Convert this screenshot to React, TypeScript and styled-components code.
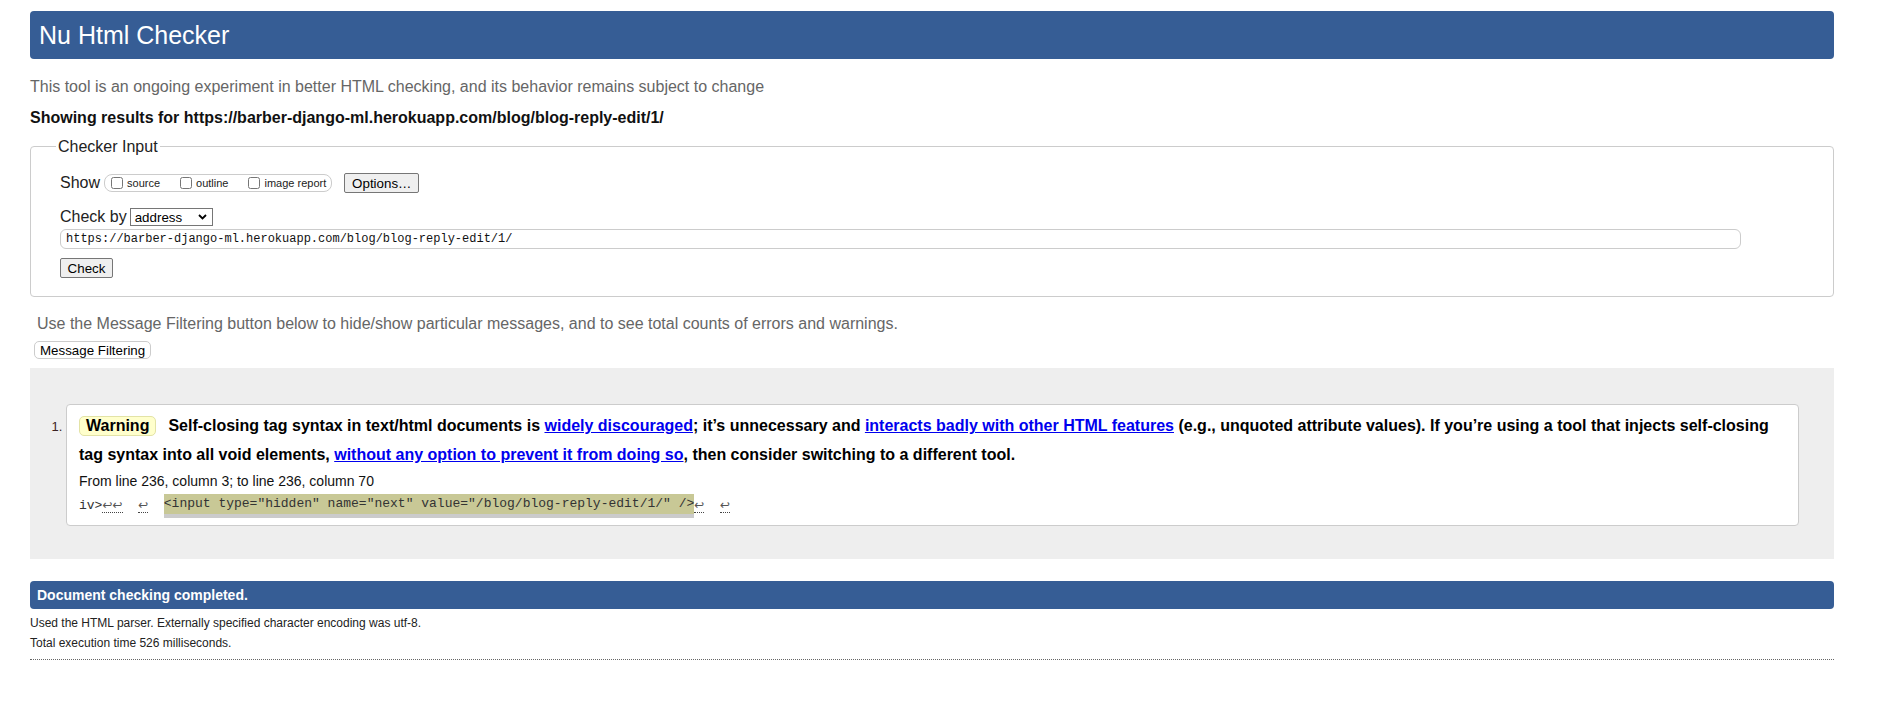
import styled, { createGlobalStyle } from "styled-components";

const GlobalStyle = createGlobalStyle`
   body {
      margin: 0;
      background: #fff;
      color: #111;
      font-family: "Liberation Sans", Arial, sans-serif;
   }
`;

const Page = styled.div`
   padding: 11px 43px 40px 30px;
`;

const TitleBar = styled.h1`
   margin: 0;
   height: 48px;
   display: flex;
   align-items: center;
   padding-left: 9px;
   background: #365d95;
   color: #fff;
   font-size: 25px;
   font-weight: normal;
   border-radius: 4px;
`;

const Intro = styled.p`
   margin: 18px 0 0;
   font-size: 16px;
   line-height: 19px;
   color: #666;
`;

const ResultsFor = styled.p`
   margin: 12px 0 0;
   font-size: 16px;
   line-height: 19px;
   font-weight: bold;
   color: #111;
`;

const InputSet = styled.fieldset`
   margin: 10px 0 0;
   padding: 17px 20px 18px 29px;
   border: 1px solid #ccc;
   border-radius: 4px;
`;

const Legend = styled.legend`
   margin-left: -4px;
   padding: 0 2px;
   font-size: 16px;
   line-height: 19px;
   color: #222;
`;

const FormRow = styled.div<{ $gap: number }>`
   display: flex;
   align-items: center;
   height: 20px;
   margin-bottom: ${(p) => p.$gap}px;
   font-size: 16px;
   color: #222;
`;

const ShowGroup = styled.span`
   display: inline-flex;
   align-items: center;
   height: 16px;
   margin-left: 4px;
   padding: 0 5px 0 6px;
   border: 1px solid #ccc;
   border-radius: 8px;
`;

const Option = styled.label`
   display: inline-flex;
   align-items: center;
   gap: 4px;
   font-size: 11px;
   color: #222;
   & + & {
      margin-left: 20px;
   }
   input {
      margin: 0;
      width: 12px;
      height: 12px;
   }
`;

const NativeButton = styled.button<{ $width: number; $offset?: number }>`
   height: 20px;
   width: ${(p) => p.$width}px;
   margin-left: ${(p) => p.$offset ?? 0}px;
   padding: 0;
   font-family: "Liberation Sans", Arial, sans-serif;
   font-size: 13.33px;
   color: #000;
   background: #efefef;
   border: 1px solid #767676;
   border-radius: 2px;
`;

const FakeSelect = styled.div`
   display: flex;
   align-items: center;
   justify-content: space-between;
   box-sizing: border-box;
   width: 83px;
   height: 18px;
   margin-left: 3px;
   padding: 0 5px 0 4px;
   border: 1px solid #767676;
   font-size: 13.33px;
   color: #000;
`;

const UrlField = styled.input`
   box-sizing: border-box;
   width: 1681px;
   height: 20px;
   padding: 0 5px;
   border: 1px solid #ccc;
   border-radius: 6px;
   font-family: "Liberation Mono", "DejaVu Sans Mono", monospace;
   font-size: 12px;
   color: #111;
`;

const FilterNote = styled(Intro)`
   margin: 17px 0 0;
   padding-left: 7px;
`;

const FilterButton = styled.button`
   height: 18px;
   margin: 8px 0 0 4px;
   padding: 0 5px;
   font-family: "Liberation Sans", Arial, sans-serif;
   font-size: 13.33px;
   color: #000;
   background: #fff;
   border: 1px solid #ccc;
   border-radius: 5px;
`;

const ResultsPanel = styled.div`
   margin-top: 9px;
   padding: 36px 35px 33px 36px;
   background: #eee;
`;

const MessageList = styled.ol`
   margin: 0;
   padding: 0;
   list-style: decimal outside;
`;

const Message = styled.li`
   padding: 6px 12px 7px;
   background: #fff;
   border: 1px solid #ccc;
   border-radius: 4px;
   &::marker {
      font-size: 13px;
      color: #3a2222;
   }
`;

const MessageText = styled.p`
   margin: 0;
   font-size: 16px;
   line-height: 29px;
   font-weight: bold;
   color: #000;
   a {
      color: #0000ee;
   }
`;

const Badge = styled.span`
   display: inline-block;
   margin-right: 12px;
   padding: 0 6px;
   line-height: 18px;
   background: #ffffcc;
   border: 1px solid #e3e3a6;
   border-radius: 5px;
`;

const Location = styled.p`
   margin: 4px 0 0;
   font-size: 14px;
   line-height: 16px;
   color: #111;
`;

const Extract = styled.p`
   margin: 5px 0 0;
   font-family: "Liberation Mono", "DejaVu Sans Mono", monospace;
   font-size: 13px;
   line-height: 24px;
   color: #333;
   white-space: pre;
`;

const LineBreak = styled.span`
   font-family: "DejaVu Sans", sans-serif;
   font-size: 12px;
   line-height: 14px;
   color: #555;
   border-bottom: 1px dotted #444;
`;

const Highlight = styled.span`
   display: inline-block;
   line-height: 20px;
   background: #c8c896;
   border-bottom: 4px solid #cbcbcb;
   vertical-align: top;
`;

const DoneBar = styled.h2`
   margin: 22px 0 0;
   height: 28px;
   display: flex;
   align-items: center;
   padding-left: 7px;
   background: #365d95;
   color: #fff;
   font-size: 14px;
   font-weight: bold;
   border-radius: 4px;
`;

const Detail = styled.p<{ $top: number }>`
   margin: ${(p) => p.$top}px 0 0;
   font-size: 12px;
   line-height: 14px;
   color: #222;
`;

const DottedRule = styled.div`
   margin-top: 9px;
   border-top: 1px dotted #666;
`;

const Chevron = () => (
   <svg width="9" height="6" viewBox="0 0 9 6">
      <path d="M1 1l3.5 3.5L8 1" fill="none" stroke="#000" strokeWidth="1.8" />
   </svg>
);

const url = "https://barber-django-ml.herokuapp.com/blog/blog-reply-edit/1/";

const App = () => {
   return (
      <>
         <GlobalStyle />
         <Page>
            <TitleBar>Nu Html Checker</TitleBar>
            <Intro>
               This tool is an ongoing experiment in better HTML checking, and its behavior remains
               subject to change
            </Intro>
            <ResultsFor>Showing results for {url}</ResultsFor>

            <InputSet>
               <Legend>Checker Input</Legend>
               <FormRow $gap={14}>
                  Show
                  <ShowGroup>
                     <Option>
                        <input type="checkbox" />
                        source
                     </Option>
                     <Option>
                        <input type="checkbox" />
                        outline
                     </Option>
                     <Option>
                        <input type="checkbox" />
                        image report
                     </Option>
                  </ShowGroup>
                  <NativeButton $width={75} $offset={12}>
                     Options…
                  </NativeButton>
               </FormRow>
               <FormRow $gap={2}>
                  Check by
                  <FakeSelect>
                     address
                     <Chevron />
                  </FakeSelect>
               </FormRow>
               <FormRow $gap={9}>
                  <UrlField defaultValue={url} />
               </FormRow>
               <FormRow $gap={0}>
                  <NativeButton $width={53}>Check</NativeButton>
               </FormRow>
            </InputSet>

            <FilterNote>
               Use the Message Filtering button below to hide/show particular messages, and to see
               total counts of errors and warnings.
            </FilterNote>
            <FilterButton>Message Filtering</FilterButton>

            <ResultsPanel>
               <MessageList>
                  <Message>
                     <MessageText>
                        <Badge>Warning</Badge>
                        Self-closing tag syntax in text/html documents is{" "}
                        <a href="#">widely discouraged</a>; it’s unnecessary and{" "}
                        <a href="#">interacts badly with other HTML features</a> (e.g., unquoted
                        attribute values). If you’re using a tool that injects self-closing tag
                        syntax into all void elements,{" "}
                        <a href="#">without any option to prevent it from doing so</a>, then
                        consider switching to a different tool.
                     </MessageText>
                     <Location>From line 236, column 3; to line 236, column 70</Location>
                     <Extract>
                        iv&gt;<LineBreak>↩↩</LineBreak>
                        {"  "}
                        <LineBreak>↩</LineBreak>
                        {"  "}
                        <Highlight>
                           &lt;input type="hidden" name="next" value="/blog/blog-reply-edit/1/" /&gt;
                        </Highlight>
                        <LineBreak>↩</LineBreak>
                        {"  "}
                        <LineBreak>↩</LineBreak>
                     </Extract>
                  </Message>
               </MessageList>
            </ResultsPanel>

            <DoneBar>Document checking completed.</DoneBar>
            <Detail $top={7}>
               Used the HTML parser. Externally specified character encoding was utf-8.
            </Detail>
            <Detail $top={6}>Total execution time 526 milliseconds.</Detail>
            <DottedRule />
         </Page>
      </>
   );
};

export default App;
